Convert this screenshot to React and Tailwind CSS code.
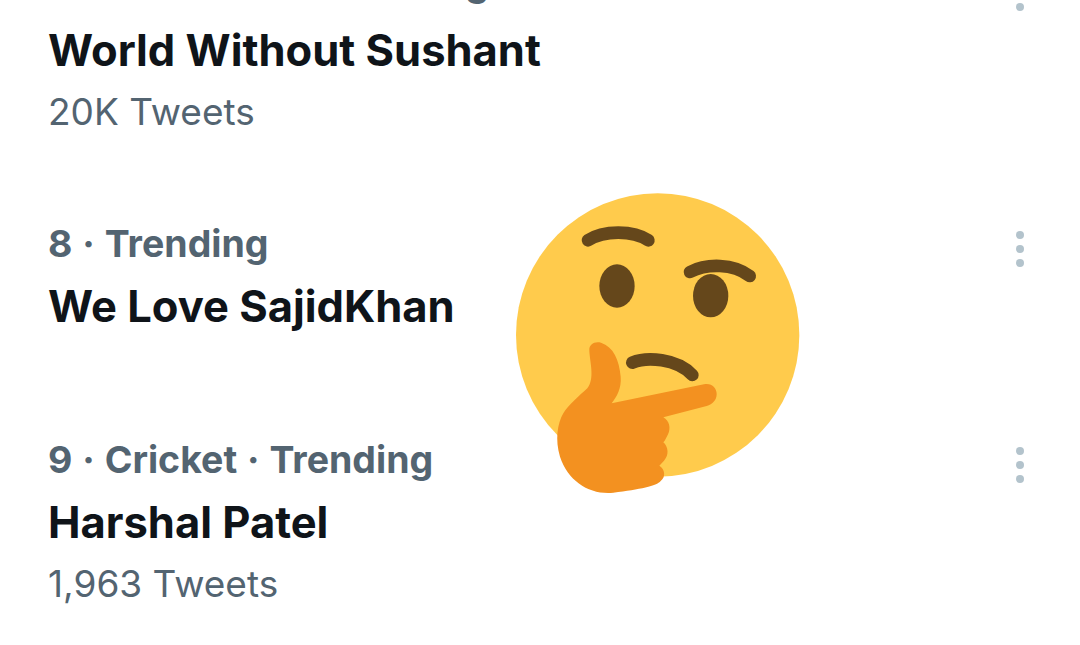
const FONT = "font-['Inter','Liberation_Sans',sans-serif]";

function Dots() {
  return (
    <div className="flex flex-col gap-[6px] pt-[19px]">
      <span className="h-[8px] w-[8px] rounded-full bg-[#b3c3cc]" />
      <span className="h-[8px] w-[8px] rounded-full bg-[#b3c3cc]" />
      <span className="h-[8px] w-[8px] rounded-full bg-[#b3c3cc]" />
    </div>
  );
}

function Row({ meta, title, count, className = "", metaClass = "leading-[63px]" }) {
  return (
    <div className={`flex justify-between pl-[48px] pr-[56px] ${className}`}>
      <div className="flex flex-col">
        <div className={`h-[63px] text-[37.5px] font-bold [word-spacing:1px] text-[#536471] whitespace-nowrap ${metaClass}`}>{meta}</div>
        <div className="h-[62px] text-[43.5px] leading-[62px] font-bold text-[#0f1419] whitespace-nowrap">{title}</div>
        {count && <div className="h-[62px] text-[37px] leading-[62px] font-normal text-[#536471] whitespace-nowrap">{count}</div>}
      </div>
      <Dots />
    </div>
  );
}

function Thinking() {
  return (
    <svg className="absolute left-[500px] top-[180px]" width="320" height="330" viewBox="0 0 960 990">
      <circle cx="473" cy="465" r="425" fill="#FFCB4C" />
      <g fill="none" stroke="#65471B" strokeWidth="38" strokeLinecap="round">
        <path d="M264 181 C310 150 400 150 445 181" />
        <path d="M570 276 C620 250 700 250 749 288" />
        <path d="M397 548 C440 530 530 535 577 585" />
      </g>
      <ellipse cx="351" cy="318" rx="53" ry="65" fill="#65471B" />
      <ellipse cx="632" cy="347" rx="53" ry="65" fill="#65471B" />
      <path
        fill="#F39120"
        d="M268 512 C266 492 285 483 303 488 C340 500 358 540 362 590 C365 625 350 650 335 670 L612 613 C635 608 650 625 650 642 C650 660 638 672 620 678 L490 712 C508 722 514 745 503 765 C498 775 495 782 490 787 C505 800 508 825 492 842 L478 857 C495 868 498 890 482 903 C470 918 420 928 340 938 C270 945 205 905 180 830 C165 780 172 730 190 700 C205 675 240 645 262 625 C285 595 270 550 268 512 Z"
      />
    </svg>
  );
}

export default function App() {
  return (
    <div className={`relative h-[645px] w-[1080px] overflow-hidden bg-white ${FONT}`}>
      <div className="-mt-[44px] flex flex-col">
        <Row meta="7 · Basketball · Trending" title="World Without Sushant" count="20K Tweets" metaClass="leading-[53px]" />
        <Row meta="8 · Trending" title="We Love SajidKhan" className="mt-[69px]" />
        <Row meta="9 · Cricket · Trending" title="Harshal Patel" count="1,963 Tweets" className="mt-[91px]" />
      </div>
      <Thinking />
    </div>
  );
}
